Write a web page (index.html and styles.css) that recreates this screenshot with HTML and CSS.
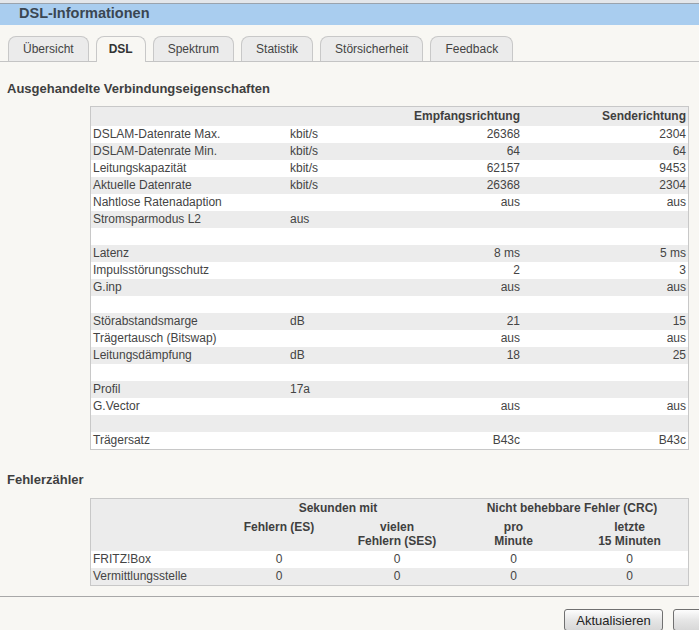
FILE: index.html
```html
<!DOCTYPE html>
<html lang="de">
<head>
<meta charset="utf-8">
<title>DSL-Informationen</title>
<link rel="stylesheet" href="styles.css">
</head>
<body>
<div class="topstrip"></div>
<div class="titlebar">DSL-Informationen</div>
<div class="tabs">
  <div class="tab">Übersicht</div>
  <div class="tab active">DSL</div>
  <div class="tab">Spektrum</div>
  <div class="tab">Statistik</div>
  <div class="tab">Störsicherheit</div>
  <div class="tab">Feedback</div>
</div>

<h2 class="heading first">Ausgehandelte Verbindungseigenschaften</h2>
<div class="tablebox">
<table class="grid props">
  <colgroup><col class="c-label"><col class="c-unit"><col class="c-rx"><col class="c-tx"></colgroup>
  <thead>
    <tr class="hdr"><th></th><th></th><th class="r">Empfangsrichtung</th><th class="r last">Senderichtung</th></tr>
  </thead>
  <tbody>
    <tr><td>DSLAM-Datenrate Max.</td><td class="u">kbit/s</td><td class="r">26368</td><td class="r last">2304</td></tr>
    <tr><td>DSLAM-Datenrate Min.</td><td class="u">kbit/s</td><td class="r">64</td><td class="r last">64</td></tr>
    <tr><td>Leitungskapazität</td><td class="u">kbit/s</td><td class="r">62157</td><td class="r last">9453</td></tr>
    <tr><td>Aktuelle Datenrate</td><td class="u">kbit/s</td><td class="r">26368</td><td class="r last">2304</td></tr>
    <tr><td>Nahtlose Ratenadaption</td><td class="u"></td><td class="r">aus</td><td class="r last">aus</td></tr>
    <tr><td>Stromsparmodus L2</td><td class="u">aus</td><td class="r"></td><td class="r last"></td></tr>
    <tr><td></td><td></td><td></td><td></td></tr>
    <tr><td>Latenz</td><td class="u"></td><td class="r">8 ms</td><td class="r last">5 ms</td></tr>
    <tr><td>Impulsstörungsschutz</td><td class="u"></td><td class="r">2</td><td class="r last">3</td></tr>
    <tr><td>G.inp</td><td class="u"></td><td class="r">aus</td><td class="r last">aus</td></tr>
    <tr><td></td><td></td><td></td><td></td></tr>
    <tr><td>Störabstandsmarge</td><td class="u">dB</td><td class="r">21</td><td class="r last">15</td></tr>
    <tr><td>Trägertausch (Bitswap)</td><td class="u"></td><td class="r">aus</td><td class="r last">aus</td></tr>
    <tr><td>Leitungsdämpfung</td><td class="u">dB</td><td class="r">18</td><td class="r last">25</td></tr>
    <tr><td></td><td></td><td></td><td></td></tr>
    <tr><td>Profil</td><td class="u">17a</td><td class="r"></td><td class="r last"></td></tr>
    <tr><td>G.Vector</td><td class="u"></td><td class="r">aus</td><td class="r last">aus</td></tr>
    <tr><td></td><td></td><td></td><td></td></tr>
    <tr><td>Trägersatz</td><td class="u"></td><td class="r">B43c</td><td class="r last">B43c</td></tr>
  </tbody>
</table>
</div>

<h2 class="heading second">Fehlerzähler</h2>
<div class="tablebox">
<table class="grid errors">
  <colgroup><col class="e-label"><col class="e-c1"><col class="e-c2"><col class="e-c3"><col class="e-c4"></colgroup>
  <thead>
    <tr class="hdr1"><th></th><th colspan="2">Sekunden mit</th><th colspan="2">Nicht behebbare Fehler (CRC)</th></tr>
    <tr class="hdr2"><th></th><th>Fehlern (ES)</th><th>vielen<br>Fehlern (SES)</th><th>pro<br>Minute</th><th>letzte<br>15 Minuten</th></tr>
  </thead>
  <tbody>
    <tr><td>FRITZ!Box</td><td class="c">0</td><td class="c">0</td><td class="c">0</td><td class="c">0</td></tr>
    <tr><td>Vermittlungsstelle</td><td class="c">0</td><td class="c">0</td><td class="c">0</td><td class="c">0</td></tr>
  </tbody>
</table>
</div>

<div class="footer">
  <button class="btn" type="button">Aktualisieren</button>
  <button class="btn" type="button" aria-label="Hilfe"></button>
</div>
</body>
</html>
```

FILE: styles.css
```css
html, body {
  margin: 0;
  padding: 0;
}

body {
  background: #f8f7f3;
  font-family: "Liberation Sans", Arial, sans-serif;
  font-size: 12px;
  color: #444444;
  overflow: hidden;
}

.topstrip {
  height: 3px;
  background: #e3e6ea;
  border-bottom: 1px solid #9aa3ad;
}

.titlebar {
  height: 21px;
  line-height: 19px;
  background: #a9cdef;
  padding-left: 19px;
  font-size: 14.5px;
  font-weight: bold;
  color: #3a4652;
}

.tabs {
  display: flex;
  gap: 7px;
  margin-top: 11px;
  padding-left: 8px;
  height: 25px;
  border-bottom: 1px solid #c4c4c4;
}

.tab {
  box-sizing: border-box;
  height: 25px;
  padding: 0 14px;
  line-height: 24px;
  border: 1px solid #c8c8c8;
  border-bottom: none;
  border-radius: 8px 8px 0 0;
  background: #ebebeb;
  color: #444444;
  white-space: nowrap;
}

.tab.active {
  height: 26px;
  padding: 0 12px;
  background: #f8f7f3;
  font-weight: bold;
  color: #333333;
}

.heading {
  margin: 0;
  padding-left: 7px;
  font-size: 13px;
  line-height: 16px;
  font-weight: bold;
  color: #3f3f3f;
}

.heading.first {
  margin-top: 19px;
  margin-bottom: 9px;
}

.heading.second {
  margin-top: 22px;
  margin-bottom: 10px;
}

.tablebox {
  margin-left: 90px;
  width: 597px;
  border: 1px solid #c8c8c8;
  background: #ffffff;
}

.grid {
  width: 597px;
  border-collapse: collapse;
  table-layout: fixed;
}

.grid td, .grid th {
  padding: 0;
  white-space: nowrap;
  overflow: hidden;
}

.grid th {
  font-weight: bold;
  color: #3f3f3f;
}

.props .c-label { width: 196px; }
.props .c-unit { width: 110px; }
.props .c-rx { width: 126px; }
.props .c-tx { width: 165px; }

.props tr { height: 17px; }
.props td, .props th { line-height: 17px; height: 17px; }
.props tr.hdr th { height: 19px; line-height: 19px; }

.props tbody tr:nth-child(odd) { background: #ffffff; }
.props tbody tr:nth-child(even) { background: #ececec; }
.props thead tr { background: #ececec; }

.props td { padding-left: 2px; }
.props td.u { padding-left: 3px; }
.props .r { text-align: right; padding-right: 3px; padding-left: 0; }
.props .r.last { padding-right: 2px; }

.errors .e-label { width: 129px; }
.errors .e-c1 { width: 118px; }
.errors .e-c2 { width: 118px; }
.errors .e-c3 { width: 115px; }
.errors .e-c4 { width: 117px; }

.errors thead tr { background: #ececec; }
.errors .hdr1 th { height: 18px; line-height: 18px; text-align: center; }
.errors .hdr2 th {
  height: 34px;
  box-sizing: border-box;
  padding-top: 3px;
  padding-bottom: 3px;
  line-height: 14px;
  vertical-align: top;
  text-align: center;
}

.errors tbody tr { height: 17px; }
.errors tbody td { line-height: 17px; height: 17px; padding-left: 2px; }
.errors tbody td.c { text-align: center; padding-left: 0; }
.errors tbody tr:nth-child(odd) { background: #ffffff; }
.errors tbody tr:nth-child(even) { background: #ececec; }

.footer {
  margin-top: 10px;
  border-top: 1px solid #a8a8a8;
  display: flex;
  justify-content: flex-end;
  gap: 10px;
  padding-top: 12px;
  margin-right: -80px;
  padding-right: 7px;
}

.btn {
  width: 99px;
  height: 22px;
  padding: 0;
  border: 1px solid #707070;
  border-radius: 3px;
  background: linear-gradient(#fdfdfd, #e6e6e6 50%, #d8d8d8);
  font-family: "Liberation Sans", Arial, sans-serif;
  font-size: 13px;
  color: #222222;
}
```
